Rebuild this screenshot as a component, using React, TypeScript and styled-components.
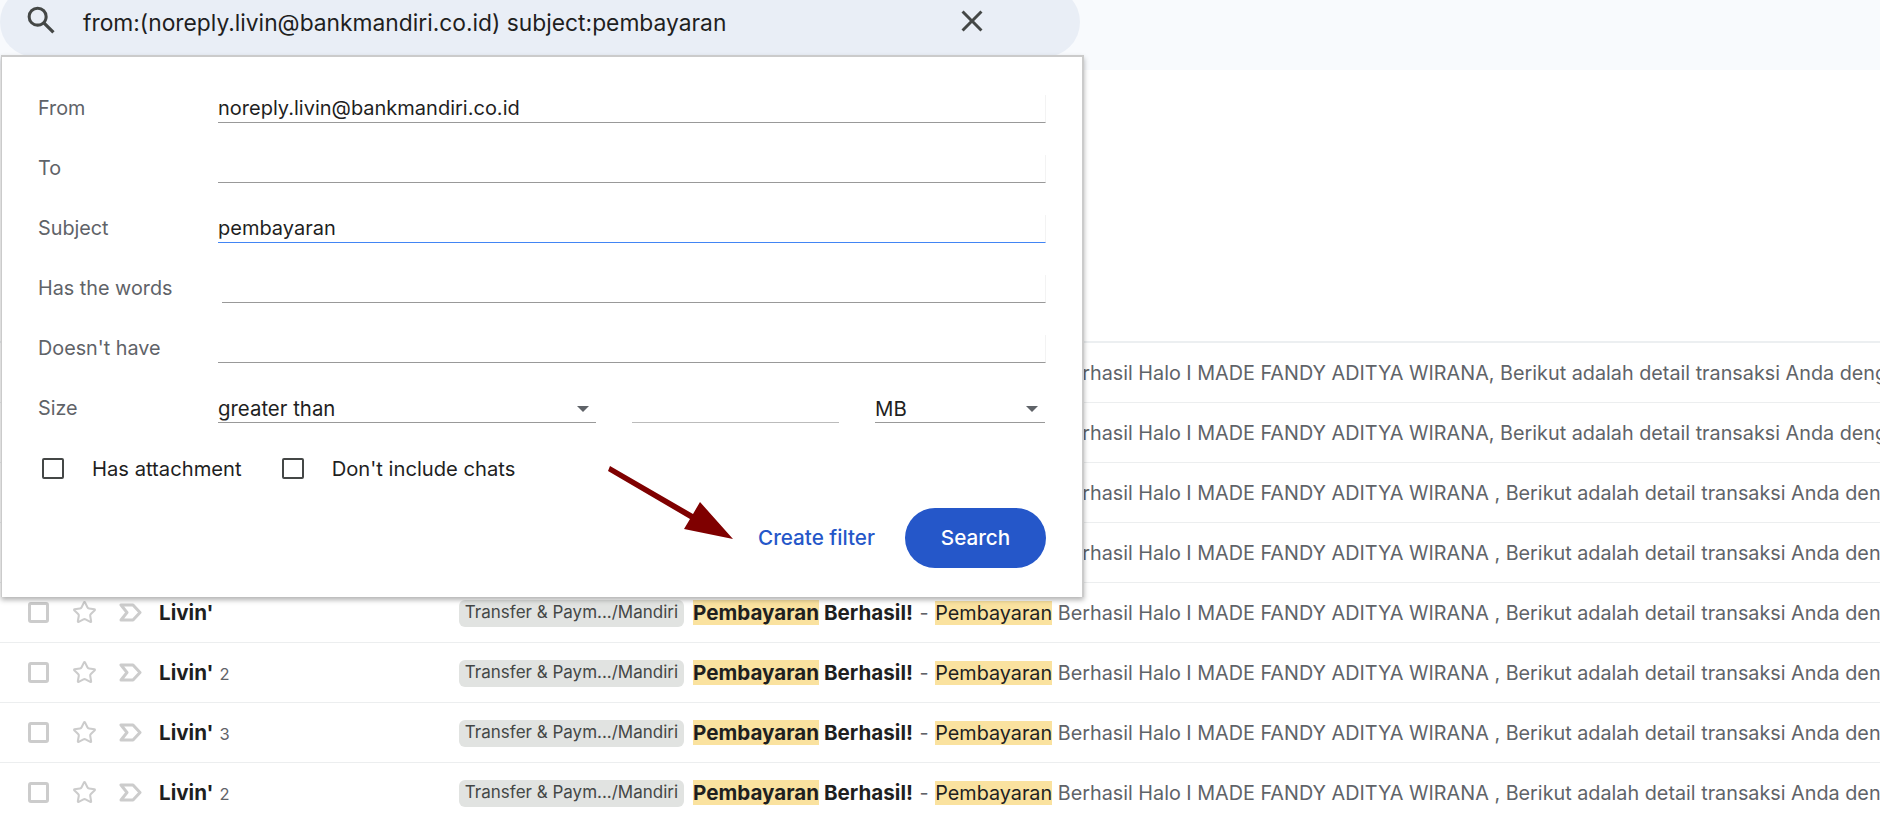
import React from 'react';
import styled, { createGlobalStyle } from 'styled-components';
import { Star } from 'lucide-react';

const GlobalStyle = createGlobalStyle`
  html, body {
    margin: 0;
    height: 100%;
    overflow: hidden;
    background: #fff;
    font-family: Inter, Roboto, "Liberation Sans", sans-serif;
  }
  * {
    box-sizing: border-box;
  }
`;

const Page = styled.div`
  position: relative;
  width: 1880px;
  height: 816px;
  overflow: hidden;
  background: #fff;
`;

const TopBand = styled.header`
  height: 70px;
  background: #f8fafd;
  overflow: hidden;
`;

const SearchBar = styled.div`
  display: flex;
  align-items: center;
  width: 1080px;
  height: 70px;
  margin-top: -13px;
  padding: 0 90px 0 23px;
  border-radius: 35px;
  background: #e9eef6;
`;

const BarIcon = styled.svg`
  flex: none;
  fill: #444746;
  margin-top: -3px;
`;

const SearchText = styled.div`
  flex: 1;
  margin-left: 23px;
  font-size: 22.8px;
  color: #1f1f1f;
  white-space: nowrap;
`;

const List = styled.main`
  margin-top: 271px;
  border-top: 2px solid #eceff1;
`;

const Row = styled.div`
  display: flex;
  align-items: center;
  height: 60px;
  padding-left: 28px;
  border-bottom: 1px solid #eceeef;
`;

const RowCheck = styled.span`
  flex: none;
  width: 21px;
  height: 21px;
  margin-right: 24px;
  border: 3px solid #ccc;
  border-radius: 3px;
`;

const StarIcon = styled(Star)`
  flex: none;
  width: 25px;
  height: 25px;
  margin: 0 22px 0 -1px;
  color: #ccc;
`;

const ImportanceIcon = styled.svg`
  flex: none;
  margin-right: 17px;
  fill: none;
  stroke: #ccc;
  stroke-width: 3;
  stroke-linejoin: round;
`;

const Sender = styled.div`
  flex: none;
  width: 300px;
  font-size: 20.6px;
  font-weight: 700;
  color: #1f1f1f;
  white-space: nowrap;
`;

const Count = styled.span`
  margin-left: 6px;
  font-size: 16.5px;
  font-weight: 400;
  color: #5f6368;
`;

const Chip = styled.span`
  flex: none;
  width: 225px;
  height: 27px;
  margin: 1px 9px 0 0;
  border-radius: 6px;
  background: #e1e3e1;
  color: #444746;
  font-size: 17px;
  line-height: 25px;
  text-align: center;
  white-space: nowrap;
`;

const Snippet = styled.div`
  flex: 1;
  min-width: 0;
  overflow: hidden;
  font-size: 19.8px;
  color: #5f6368;
  white-space: nowrap;
`;

const Subject = styled.b`
  font-size: 20.6px;
  font-weight: 700;
  color: #1f1f1f;
`;

const Dash = styled.span`
  margin: 0 1px;
`;

const Hit = styled.span`
  background: #fae29f;
  color: #1f1f1f;
`;

const FilterPanel = styled.form`
  position: absolute;
  top: 55px;
  left: 1px;
  width: 1083px;
  height: 542px;
  padding: 38px 36px 0 36px;
  background: #fff;
  border: 2px solid #cbcbcb;
  border-left-width: 1px;
  border-bottom: 0;
  box-shadow: 0 3px 5px rgba(0, 0, 0, 0.3);
`;

const FormRow = styled.div`
  display: flex;
  align-items: center;
  height: 28px;
  margin-bottom: 32px;
`;

const FieldLabel = styled.label`
  flex: none;
  width: 180px;
  padding-bottom: 2px;
  font-size: 19.8px;
  color: #5f6368;
`;

const Field = styled.div<{ $active?: boolean; $indent?: number }>`
  flex: 1;
  height: 28px;
  margin-left: ${(p) => p.$indent ?? 0}px;
  border-bottom: 1px solid ${(p) => (p.$active ? '#4285f4' : '#999')};
  border-right: 1px solid #f3f3f3;
  font-size: 20px;
  line-height: 26px;
  color: #1f1f1f;
  white-space: nowrap;
`;

const SelectBox = styled.div<{ $width: number }>`
  display: flex;
  flex: none;
  align-items: center;
  justify-content: space-between;
  width: ${(p) => p.$width}px;
  height: 28px;
  padding-right: 7px;
  border-bottom: 1px solid #999;
  font-size: 20.4px;
  color: #1f1f1f;
`;

const Caret = styled.span`
  width: 0;
  height: 0;
  border-left: 6px solid transparent;
  border-right: 6px solid transparent;
  border-top: 6px solid #5f6368;
`;

const SizeField = styled.div`
  flex: none;
  width: 207px;
  height: 28px;
  margin: 0 36px;
  border-bottom: 1px solid #bbb;
`;

const CheckRow = styled.div`
  display: flex;
  align-items: center;
  height: 28px;
  margin-top: -1px;
  padding-left: 4px;
`;

const FormCheck = styled.span`
  flex: none;
  width: 22px;
  height: 21px;
  margin-right: 28px;
  border: 2px solid #444746;
  border-radius: 2px;
`;

const CheckLabel = styled.span`
  margin-right: 40px;
  font-size: 20.2px;
  color: #1f1f1f;
  white-space: nowrap;
`;

const Actions = styled.div`
  display: flex;
  align-items: center;
  justify-content: flex-end;
  gap: 30px;
  margin-top: 26px;
`;

const FilterLink = styled.a`
  padding-bottom: 2px;
  font-size: 20.7px;
  font-weight: 500;
  color: #2557c9;
`;

const SearchButton = styled.button`
  width: 141px;
  height: 60px;
  padding: 0 0 2px;
  border: 0;
  border-radius: 30px;
  background: #2557c9;
  color: #fff;
  font-family: inherit;
  font-size: 20.7px;
  font-weight: 500;
`;

const Annotation = styled.svg`
  position: absolute;
  top: 0;
  left: 0;
  pointer-events: none;
`;

const rows = [
  { count: '', spaced: false },
  { count: '', spaced: false },
  { count: '', spaced: true },
  { count: '', spaced: true },
  { count: '', spaced: true },
  { count: '2', spaced: true },
  { count: '3', spaced: true },
  { count: '2', spaced: true },
];

export default function App() {
  return (
    <Page>
      <GlobalStyle />
      <TopBand>
        <SearchBar>
          <BarIcon width="37" height="37" viewBox="0 0 24 24">
            <path d="M20.49 19l-5.73-5.73C15.53 12.2 16 10.91 16 9.5A6.5 6.5 0 1 0 9.5 16c1.41 0 2.7-.47 3.77-1.24L19 20.49 20.49 19zM5 9.5C5 7.01 7.01 5 9.5 5S14 7.01 14 9.5 11.99 14 9.5 14 5 11.99 5 9.5z" />
          </BarIcon>
          <SearchText>from:(noreply.livin@bankmandiri.co.id) subject:pembayaran</SearchText>
          <BarIcon width="36" height="36" viewBox="0 0 24 24">
            <path d="M19 6.41L17.59 5 12 10.59 6.41 5 5 6.41 10.59 12 5 17.59 6.41 19 12 13.41 17.59 19 19 17.59 13.41 12z" />
          </BarIcon>
        </SearchBar>
      </TopBand>

      <List>
        {rows.map((row, i) => (
          <Row key={i}>
            <RowCheck />
            <StarIcon strokeWidth={2} />
            <ImportanceIcon width="23" height="19" viewBox="0 0 23 19">
              <path d="M2 2h12l7 7.5-7 7.5H2l6-7.5z" />
            </ImportanceIcon>
            <Sender>
              Livin'
              {row.count && <Count>{row.count}</Count>}
            </Sender>
            <Chip>Transfer &amp; Paym.../Mandiri</Chip>
            <Snippet>
              <Subject>
                <Hit>Pembayaran</Hit> Berhasil!
              </Subject>{' '}
              <Dash>-</Dash> <Hit>Pembayaran</Hit> Berhasil Halo I MADE FANDY ADITYA WIRANA
              {row.spaced ? ' ,' : ','} Berikut adalah detail transaksi Anda dengan rincian sebagai berikut
            </Snippet>
          </Row>
        ))}
      </List>

      <FilterPanel>
        <FormRow>
          <FieldLabel>From</FieldLabel>
          <Field>noreply.livin@bankmandiri.co.id</Field>
        </FormRow>
        <FormRow>
          <FieldLabel>To</FieldLabel>
          <Field />
        </FormRow>
        <FormRow>
          <FieldLabel>Subject</FieldLabel>
          <Field $active>pembayaran</Field>
        </FormRow>
        <FormRow>
          <FieldLabel>Has the words</FieldLabel>
          <Field $indent={4} />
        </FormRow>
        <FormRow>
          <FieldLabel>Doesn't have</FieldLabel>
          <Field />
        </FormRow>
        <FormRow>
          <FieldLabel>Size</FieldLabel>
          <SelectBox $width={378}>
            greater than
            <Caret />
          </SelectBox>
          <SizeField />
          <SelectBox $width={170}>
            MB
            <Caret />
          </SelectBox>
        </FormRow>
        <CheckRow>
          <FormCheck />
          <CheckLabel>Has attachment</CheckLabel>
          <FormCheck />
          <CheckLabel>Don't include chats</CheckLabel>
        </CheckRow>
        <Actions>
          <FilterLink>Create filter</FilterLink>
          <SearchButton type="button">Search</SearchButton>
        </Actions>
      </FilterPanel>

      <Annotation width="1880" height="816">
        <path d="M610 466L608 471L690 519L684 529L733 539L700 502L693 514Z" fill="#7f0000" />
      </Annotation>
    </Page>
  );
}
